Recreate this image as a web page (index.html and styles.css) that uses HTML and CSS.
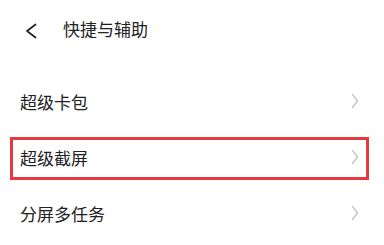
FILE: index.html
```html
<!DOCTYPE html>
<html lang="zh">
<head>
<meta charset="utf-8">
<link rel="stylesheet" href="styles.css">
</head>
<body>
<div class="page">
  <header class="header">
    <svg class="back" width="12" height="16" viewBox="0 0 12 16"><polyline points="10.5,1.5 2,8 10.5,14.5" fill="none" stroke="#222" stroke-width="1.7" stroke-linecap="round" stroke-linejoin="round"/></svg>
    <span class="title">快捷与辅助</span>
  </header>
  <ul class="list">
    <li class="row"><span>超级卡包</span><svg class="chev" width="8" height="16" viewBox="0 0 8 16"><polyline points="1.5,1.5 6.5,8 1.5,14.5" fill="none" stroke="#c6c6c6" stroke-width="1.4" stroke-linecap="round" stroke-linejoin="round"/></svg></li>
    <li class="row"><span>超级截屏</span><svg class="chev" width="8" height="16" viewBox="0 0 8 16"><polyline points="1.5,1.5 6.5,8 1.5,14.5" fill="none" stroke="#c6c6c6" stroke-width="1.4" stroke-linecap="round" stroke-linejoin="round"/></svg><div class="highlight"></div></li>
    <li class="row"><span>分屏多任务</span><svg class="chev" width="8" height="16" viewBox="0 0 8 16"><polyline points="1.5,1.5 6.5,8 1.5,14.5" fill="none" stroke="#c6c6c6" stroke-width="1.4" stroke-linecap="round" stroke-linejoin="round"/></svg></li>
  </ul>
</div>
</body>
</html>
```
FILE: styles.css
```css
html, body {
  margin: 0;
  padding: 0;
  background: #ffffff;
}
.page {
  width: 384px;
  height: 245px;
  overflow: hidden;
  font-family: "Noto Sans CJK SC", "Noto Sans", sans-serif;
  color: #222222;
}
.header {
  height: 56px;
  display: flex;
  align-items: center;
  padding-left: 25px;
  box-sizing: border-box;
}
.back {
  margin-top: 6px;
  display: block;
}
.title {
  font-size: 17px;
  margin-left: 26px;
  line-height: 1;
}
.list {
  list-style: none;
  margin: 17px 0 0 0;
  padding: 0;
}
.row {
  position: relative;
  height: 56px;
  display: flex;
  align-items: center;
  justify-content: space-between;
  padding: 0 25px 0 20px;
  font-size: 17px;
  line-height: 1;
}
.chev {
  display: block;
}
.highlight {
  position: absolute;
  left: 10px;
  top: 8px;
  width: 359px;
  height: 43px;
  box-sizing: border-box;
  border: 3px solid #e53a40;
}
```
